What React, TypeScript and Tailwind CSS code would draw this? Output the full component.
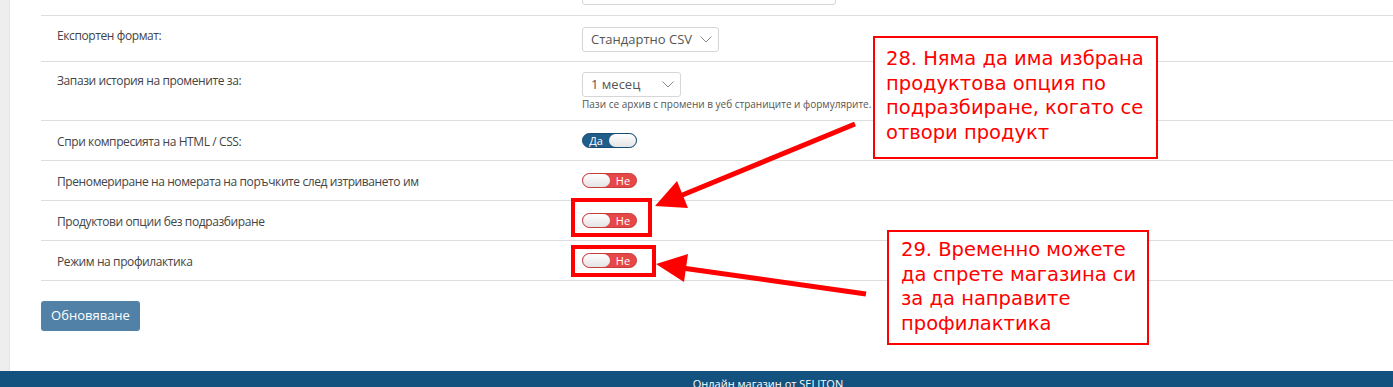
import React from "react";

const Chevron = () => (
  <svg width="12" height="7" viewBox="0 0 12 7" className="shrink-0">
    <polyline points="0.5,0.5 6,6 11.5,0.5" fill="none" stroke="#8a8a8a" strokeWidth="1" />
  </svg>
);

const Select = ({ label, width }: { label: string; width: string }) => (
  <div
    className={`${width} h-[25px] flex items-center justify-between pl-[8px] pr-[6px] border border-[#d6d6d6] rounded-[3px] bg-white text-[13px] text-[#555]`}
  >
    <span>{label}</span>
    <Chevron />
  </div>
);

const Toggle = ({ on }: { on: boolean }) =>
  on ? (
    <div className="w-[55px] h-[15px] rounded-full bg-[#1f5d8a] border border-[#184b70] flex items-center">
      <span className="w-[26px] text-center text-white text-[11px] leading-none">Да</span>
      <span className="w-[27px] h-[13px] rounded-full bg-gradient-to-b from-white to-[#e4e4e4]" />
    </div>
  ) : (
    <div className="w-[55px] h-[15px] rounded-full bg-[#e64848] border border-[#c83b3b] flex items-center">
      <span className="w-[27px] h-[13px] rounded-full bg-gradient-to-b from-white to-[#e4e4e4]" />
      <span className="w-[26px] text-center text-white text-[11px] leading-none">Не</span>
    </div>
  );

const Row = ({ label, h, pt, children }: { label: string; h: string; pt: string; children: React.ReactNode }) => (
  <div className={`${h} flex border-b border-[#dddddd]`}>
    <div className={`w-[541px] pl-[16px] ${pt} text-[12px] leading-[18px] tracking-[-0.4px] text-[#444]`}>{label}</div>
    <div className={`flex-1 ${pt}`}>{children}</div>
  </div>
);

export default function App() {
  return (
    <div className="relative h-[387px] overflow-hidden bg-white font-['Open_Sans',sans-serif]">
      <div className="flex h-[371px]">
        <div className="w-[10px] bg-[#eeeeee] border-r border-[#e4e4e4]" />
        <div className="flex-1 pl-[31px]">
          <div className="h-[16px] flex items-end border-b border-[#dddddd]">
            <div className="ml-[541px] mb-[10px] w-[254px] h-[24px] border border-[#d6d6d6] rounded-[3px]" />
          </div>
          <Row label="Експортен формат:" h="h-[46px]" pt="pt-[11px]">
            <Select label="Стандартно CSV" width="w-[137px]" />
          </Row>
          <Row label="Запази история на промените за:" h="h-[59px]" pt="pt-[10px]">
            <Select label="1 месец" width="w-[99px]" />
            <div className="mt-[1px] text-[10px] leading-[13px] text-[#555] whitespace-nowrap">
              Пази се архив с промени в уеб страниците и формулярите.
            </div>
          </Row>
          <Row label="Спри компресията на HTML / CSS:" h="h-[40px]" pt="pt-[12px]">
            <Toggle on />
          </Row>
          <Row label="Преномериране на номерата на поръчките след изтриването им" h="h-[40px]" pt="pt-[12px]">
            <Toggle on={false} />
          </Row>
          <Row label="Продуктови опции без подразбиране" h="h-[40px]" pt="pt-[12px]">
            <Toggle on={false} />
          </Row>
          <Row label="Режим на профилактика" h="h-[40px]" pt="pt-[12px]">
            <Toggle on={false} />
          </Row>
          <button className="mt-[20px] w-[99px] h-[30px] rounded-[3px] bg-[#5181a6] text-white text-[13px]">
            Обновяване
          </button>
        </div>
      </div>
      <footer className="h-[30px] bg-[#13527e] pl-[143px] pt-[6px] text-center text-white text-[11px] leading-[14px]">
        Онлайн магазин от SELITON
      </footer>

      {/* annotations */}
      <svg className="absolute inset-0 pointer-events-none" width="1393" height="387">
        <rect x="573" y="200" width="77" height="35" fill="none" stroke="#ff0000" strokeWidth="4" />
        <rect x="573" y="247" width="81" height="28" fill="none" stroke="#ff0000" strokeWidth="4" />
        <line x1="855" y1="124" x2="680" y2="196" stroke="#ff0000" strokeWidth="5" />
        <polygon points="655,206 677,181 688,208" fill="#ff0000" />
        <line x1="866" y1="294" x2="682" y2="268" stroke="#ff0000" strokeWidth="5" />
        <polygon points="656,264 688,254 684,282" fill="#ff0000" />
      </svg>
      <div className="absolute left-[873px] top-[36px] w-[285px] h-[123px] border-2 border-[#ff0000] bg-white pl-[11px] pt-[9px] font-['DejaVu_Sans',sans-serif] text-[19.5px] leading-[24.5px] whitespace-nowrap text-[#ff0000]">
        28. Няма да има избрана
        <br />
        продуктова опция по
        <br />
        подразбиране, когато се
        <br />
        отвори продукт
      </div>
      <div className="absolute left-[887px] top-[230px] w-[262px] h-[115px] border-2 border-[#ff0000] bg-white pl-[12px] pt-[6px] font-['DejaVu_Sans',sans-serif] text-[19.5px] leading-[24.5px] whitespace-nowrap text-[#ff0000]">
        29. Временно можете
        <br />
        да спрете магазина си
        <br />
        за да направите
        <br />
        профилактика
      </div>
    </div>
  );
}
